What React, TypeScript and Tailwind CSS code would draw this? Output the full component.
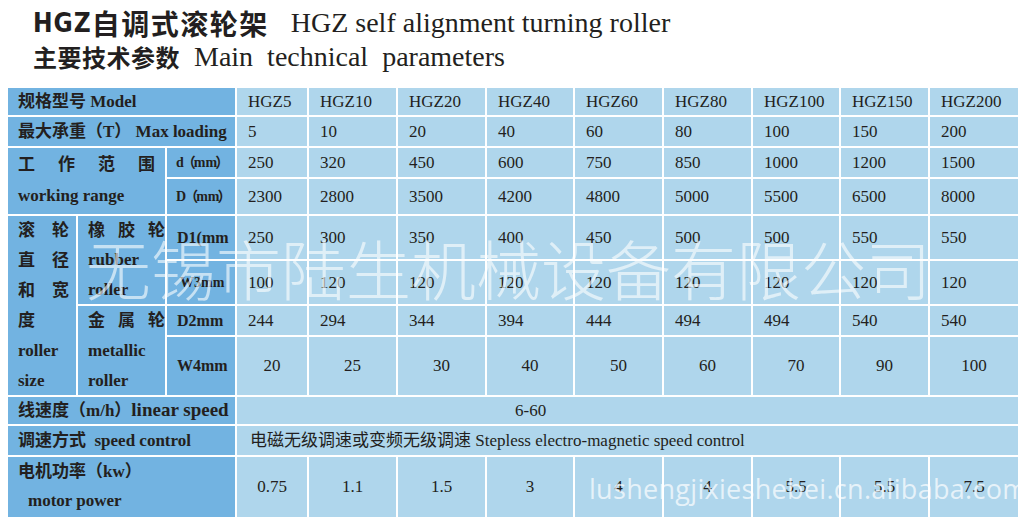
import React from "react";

const models = ["HGZ5", "HGZ10", "HGZ20", "HGZ40", "HGZ60", "HGZ80", "HGZ100", "HGZ150", "HGZ200"];
const loads = ["5", "10", "20", "40", "60", "80", "100", "150", "200"];
const dSmall = ["250", "320", "450", "600", "750", "850", "1000", "1200", "1500"];
const dBig = ["2300", "2800", "3500", "4200", "4800", "5000", "5500", "6500", "8000"];
const d1 = ["250", "300", "350", "400", "450", "500", "500", "550", "550"];
const w3 = ["100", "120", "120", "120", "120", "120", "120", "120", "120"];
const d2 = ["244", "294", "344", "394", "444", "494", "494", "540", "540"];
const w4 = ["20", "25", "30", "40", "50", "60", "70", "90", "100"];
const power = ["0.75", "1.1", "1.5", "3", "4", "4", "5.5", "5.5", "7.5"];

// label cells (darker blue)
function Label({ className = "", children }: { className?: string; children: React.ReactNode }) {
  return <div className={`bg-[#72b3e1] flex items-center whitespace-nowrap ${className}`}>{children}</div>;
}

// value cells (light blue)
function Values({ items, center = false }: { items: string[]; center?: boolean }) {
  return (
    <>
      {items.map((v, i) => (
        <div
          key={i}
          className={`bg-[#afd6ec] flex items-center text-[17px] ${center ? "justify-center" : "pl-[11px]"}`}
        >
          {v}
        </div>
      ))}
    </>
  );
}

export default function App() {
  return (
    <div className="relative w-[1024px] h-[525px] bg-white overflow-hidden text-[#231f20]">
      {/* heading */}
      <div className="pt-[6px] pl-[33px]">
        <div className="h-[34px] flex items-center">
          <span className="font-['DejaVu_Sans_Condensed','DejaVu_Sans',sans-serif] font-bold text-[26px] tracking-[1px]">HGZ</span>
          <span className="font-['Noto_Sans_CJK_SC',sans-serif] font-bold text-[28px] tracking-[1.5px]">自调式滚轮架</span>
          <span className="ml-[22px] font-['Liberation_Serif',serif] text-[28px]">HGZ self alignment turning roller</span>
        </div>
        <div className="h-[34px] flex items-center">
          <span className="font-['Noto_Sans_CJK_SC',sans-serif] font-bold text-[24px] tracking-[0.5px]">主要技术参数</span>
          <span className="ml-[14px] font-['Liberation_Serif',serif] text-[28px] whitespace-pre">Main  technical  parameters</span>
        </div>
      </div>

      {/* parameters table */}
      <div className="mt-[14px] ml-[8px] w-[1010px] grid gap-[2px] bg-white grid-cols-[68px_87px_68px_70px_87px_87px_86px_87px_87px_86px_87px_88px] grid-rows-[27px_29px_29px_35px_43px_43px_29px_58px_27px_29px_60px] font-['Liberation_Serif','Noto_Sans_CJK_SC',serif]">
        <Label className="col-span-3 pl-[10px] text-[17px] font-bold">
          规格型号 Model
        </Label>
        <Values items={models} />

        <Label className="col-span-3 pl-[10px] text-[17px] font-bold whitespace-pre">
          最大承重（T） Max loading
        </Label>
        <Values items={loads} />

        <div className="col-span-2 row-span-2 bg-[#72b3e1] flex flex-col justify-around pl-[10px] pr-[10px] pt-[1px] pb-[3px] text-[17px] font-bold">
          <div className="flex justify-between">
            <span>工</span>
            <span>作</span>
            <span>范</span>
            <span>围</span>
          </div>
          <div>working range</div>
        </div>
        <Label className="pl-[9px] text-[14px] font-bold">
          d<span className="-mx-[2px]">（</span>mm<span className="-ml-[2px]">）</span>
        </Label>
        <Values items={dSmall} />
        <Label className="pl-[9px] text-[14px] font-bold">
          D<span className="-mx-[2px]">（</span>mm<span className="-ml-[2px]">）</span>
        </Label>
        <Values items={dBig} />

        <div className="row-span-4 bg-[#72b3e1] flex flex-col justify-around pl-[10px] text-[17px] font-bold leading-none">
          <div className="flex justify-between w-[51px]">
            <span>滚</span>
            <span>轮</span>
          </div>
          <div className="flex justify-between w-[51px]">
            <span>直</span>
            <span>径</span>
          </div>
          <div className="flex justify-between w-[51px]">
            <span>和</span>
            <span>宽</span>
          </div>
          <div>度</div>
          <div>roller</div>
          <div>size</div>
        </div>
        <div className="row-span-2 bg-[#72b3e1] flex flex-col justify-around pl-[10px] text-[17px] font-bold leading-none">
          <div className="flex gap-[13px]">
            <span>橡</span>
            <span>胶</span>
            <span>轮</span>
          </div>
          <div>rubber</div>
          <div>roller</div>
        </div>
        <Label className="pl-[10px] text-[16px] font-bold">D1(mm</Label>
        <Values items={d1} />
        <Label className="pl-[13px] text-[14px] font-bold">W3mm</Label>
        <Values items={w3} />

        <div className="row-span-2 bg-[#72b3e1] flex flex-col justify-around pl-[10px] text-[17px] font-bold leading-none">
          <div className="flex gap-[13px]">
            <span>金</span>
            <span>属</span>
            <span>轮</span>
          </div>
          <div>metallic</div>
          <div>roller</div>
        </div>
        <Label className="pl-[10px] text-[16px] font-bold">D2mm</Label>
        <Values items={d2} />
        <Label className="pl-[10px] text-[16px] font-bold">W4mm</Label>
        <Values items={w4} center />

        <Label className="col-span-3 pl-[10px] text-[17px] font-bold">
          线速度（m/h）<span className="text-[19px]">linear speed</span>
        </Label>
        <div className="col-span-9 bg-[#afd6ec] flex items-center pl-[278px] text-[17px]">6-60</div>

        <Label className="col-span-3 pl-[10px] text-[17px] font-bold whitespace-pre">
          调速方式  speed control
        </Label>
        <div className="col-span-9 bg-[#afd6ec] flex items-center pl-[13px] text-[17px]">
          电磁无级调速或变频无级调速 Stepless electro-magnetic speed control
        </div>

        <div className="col-span-3 bg-[#72b3e1] flex flex-col justify-around pl-[10px] pb-[2px] text-[17px] font-bold">
          <div>电机功率（kw）</div>
          <div className="pl-[10px]">motor power</div>
        </div>
        <Values items={power} center />
      </div>

      {/* watermarks */}
      <div className="pointer-events-none absolute left-[86px] top-[235px] whitespace-nowrap font-['Noto_Sans_CJK_SC',sans-serif] font-light text-[65px] leading-none text-white/60">
        无锡市陆生机械设备有限公司
      </div>
      <div className="pointer-events-none absolute left-[589px] top-[475px] whitespace-nowrap font-['Open_Sans',sans-serif] text-[27px] tracking-[0.3px] leading-none text-white/70">
        lushengjixieshebei.cn.alibaba.com
      </div>
    </div>
  );
}
